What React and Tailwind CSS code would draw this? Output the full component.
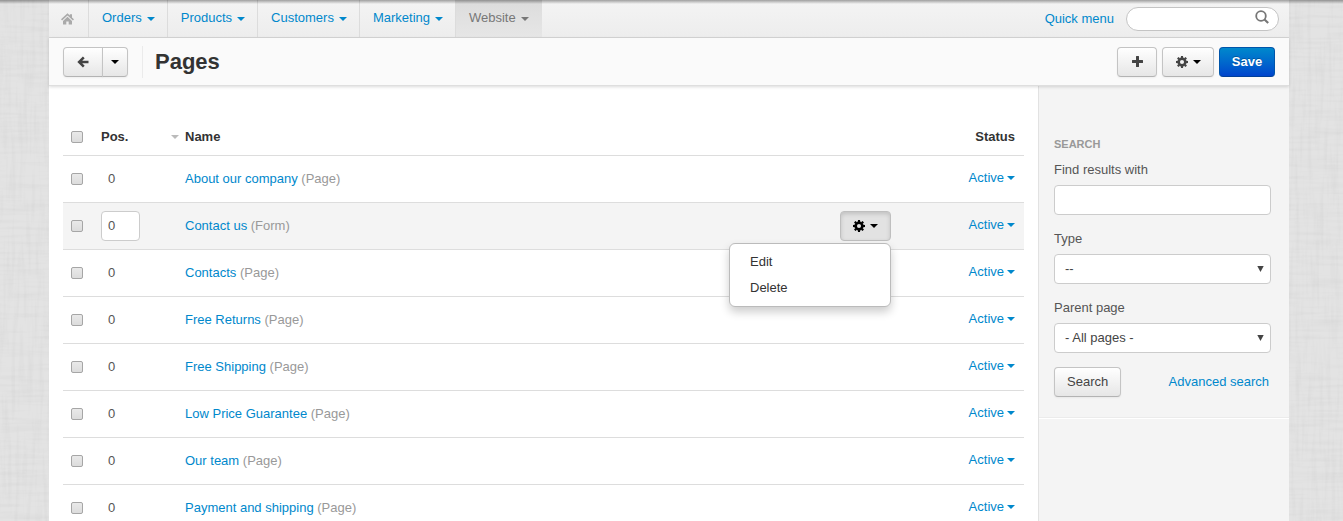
import React from "react";

const NAV = ["Orders", "Products", "Customers", "Marketing", "Website"];

const PAGES = [
  { name: "About our company", type: "Page" },
  { name: "Contact us", type: "Form", open: true },
  { name: "Contacts", type: "Page" },
  { name: "Free Returns", type: "Page" },
  { name: "Free Shipping", type: "Page" },
  { name: "Low Price Guarantee", type: "Page" },
  { name: "Our team", type: "Page" },
  { name: "Payment and shipping", type: "Page" },
];

const BUTTON =
  "flex h-[30px] items-center justify-center rounded border border-[#c4c4c4] border-b-[#b3b3b3] bg-linear-to-b from-white to-[#e6e6e6] text-[#444] shadow-[0_1px_2px_rgba(0,0,0,0.05)]";
const CHECKBOX =
  "block size-3 appearance-none rounded-[2px] border border-[#a6a6a6] bg-linear-to-b from-[#e9e9e9] to-[#dcdcdc] checked:bg-[#0088cc]";
const FIELD = "h-[30px] w-full rounded border border-[#ccc] bg-white text-[#444]";

function Caret({ className = "" }) {
  return (
    <svg className={`h-1 w-2 shrink-0 ${className}`} viewBox="0 0 8 4" fill="currentColor" aria-hidden="true">
      <path d="M0 0h8L4 4z" />
    </svg>
  );
}

function HomeIcon() {
  return (
    <svg className="h-3 w-[13px]" viewBox="0 0 13 12" fill="currentColor" aria-hidden="true">
      <path d="M6.500 .3 8.800 2.400V1.200h2.200v3.200l2 1.900-1.100 1.300L6.500 2.600 1.100 7.600 0 6.300z" />
      <path d="M6.500 3.700 11 7.900V11.600H7.700V8.400H5.300v3.200H2V7.900z" />
    </svg>
  );
}

function ArrowIcon() {
  return (
    <svg className="size-3" viewBox="0 0 12 12" fill="none" stroke="currentColor" strokeWidth="2.500" aria-hidden="true">
      <path d="M6.800 1.300 2.100 6l4.700 4.700M2.300 6h9.200" />
    </svg>
  );
}

function PlusIcon() {
  return (
    <svg className="size-[11px]" viewBox="0 0 11 11" fill="currentColor" aria-hidden="true">
      <path d="M4 .5Q4 0 4.500 0h2Q7 0 7 .5V4h3.500q.5 0 .5.5v2q0 .5-.5.5H7v3.500q0 .5-.5.5h-2Q4 11 4 10.500V7H.5Q0 7 0 6.500v-2Q0 4 .5 4H4z" />
    </svg>
  );
}

function GearIcon() {
  return (
    <svg className="size-3" viewBox="0 0 12 12" aria-hidden="true">
      <circle cx="6" cy="6" r="3.300" fill="none" stroke="currentColor" strokeWidth="2.500" />
      <g fill="currentColor">
        {[0, 45, 90, 135].map((angle) => (
          <g key={angle} transform={`rotate(${angle} 6 6)`}>
            <path d="M4.800 2 5 0h2l.2 2zM4.800 10l.2 2h2l.2-2z" />
          </g>
        ))}
      </g>
    </svg>
  );
}

function SearchIcon() {
  return (
    <svg className="size-[14px]" viewBox="0 0 14 14" fill="none" stroke="currentColor" strokeWidth="1.800" aria-hidden="true">
      <circle cx="6" cy="6" r="4.800" />
      <path d="m9.500 9.500 3.700 3.500" strokeWidth="2.200" />
    </svg>
  );
}

function Linen() {
  return (
    <svg className="absolute inset-0 -z-10 size-full" aria-hidden="true">
      <filter id="weft" x="0" y="0" width="100%" height="100%">
        <feTurbulence type="fractalNoise" baseFrequency="0.020 0.250" numOctaves="2" seed="4" />
        <feColorMatrix values="0 0 0 0 0  0 0 0 0 0  0 0 0 0 0  0.500 0 0 0 -0.200" />
      </filter>
      <filter id="warp" x="0" y="0" width="100%" height="100%">
        <feTurbulence type="fractalNoise" baseFrequency="0.250 0.020" numOctaves="2" seed="9" />
        <feColorMatrix values="0 0 0 0 0  0 0 0 0 0  0 0 0 0 0  0.500 0 0 0 -0.200" />
      </filter>
      <rect width="100%" height="100%" filter="url(#weft)" opacity="0.100" />
      <rect width="100%" height="100%" filter="url(#warp)" opacity="0.100" />
    </svg>
  );
}

function TopNav() {
  return (
    <nav className="flex h-[38px] border-b border-[#d6d6d6] bg-linear-to-b from-[#f4f4f4] to-[#ededed]">
      <a href="#home" aria-label="Home" className="flex w-10 items-center justify-center border-r border-[#dcdcdc] pr-0.5 text-[#aaa]">
        <HomeIcon />
      </a>
      {NAV.map((item) => (
        <a
          key={item}
          href={`#${item.toLowerCase()}`}
          className={
            item === "Website"
              ? "flex items-center gap-[5px] bg-linear-to-b from-[#dcdcdc] to-[#e6e6e6] px-[13px] pb-0.5 text-[#777]"
              : "flex items-center gap-[5px] border-r border-[#dcdcdc] pr-3 pb-0.5 pl-[13px] text-[#0088cc]"
          }
        >
          {item}
          <Caret className="mt-0.5" />
        </a>
      ))}
      <div className="ml-auto flex items-center gap-3 pr-2.5">
        <a href="#quick" className="text-[#0088cc]">Quick menu</a>
        <form className="relative">
          <input type="search" aria-label="Search" className="block h-6 w-[153px] appearance-none rounded-full border border-[#c4c4c4] bg-white pr-8 pl-3" />
          <button type="button" aria-label="Search" className="absolute top-[3px] right-2.5 text-[#777]">
            <SearchIcon />
          </button>
        </form>
      </div>
    </nav>
  );
}

function TitleBar() {
  return (
    <header className="relative flex h-12 items-center border-b border-[#dedede] bg-[#fafafa] px-3.5 shadow-[0_1px_3px_rgba(0,0,0,0.15)]">
      <div className="flex">
        <button type="button" aria-label="Back" className={`${BUTTON} w-10 rounded-r-none`}>
          <ArrowIcon />
        </button>
        <button type="button" aria-label="Recent pages" className={`${BUTTON} -ml-px w-[26px] rounded-l-none`}>
          <Caret className="text-black" />
        </button>
      </div>
      <h1 className="ml-3.5 flex h-8 items-center border-l border-[#ebebeb] pl-3 text-[22px] font-bold text-[#333]">Pages</h1>
      <div className="ml-auto flex gap-[5px]">
        <button type="button" aria-label="Add page" className={`${BUTTON} w-10`}>
          <PlusIcon />
        </button>
        <button type="button" aria-label="Settings" className={`${BUTTON} w-[52px] gap-[5px]`}>
          <GearIcon />
          <Caret className="text-black" />
        </button>
        <button
          type="button"
          className="h-[30px] w-14 rounded border border-[#0055aa] border-b-[#003f99] bg-linear-to-b from-[#0088cc] to-[#0044cc] font-bold text-white [text-shadow:0_-1px_0_rgba(0,0,0,0.25)]"
        >
          Save
        </button>
      </div>
    </header>
  );
}

function RowMenu() {
  return (
    <div className="relative ml-auto w-[51px]">
      <button
        type="button"
        aria-label="Row actions"
        aria-expanded="true"
        className="flex h-[30px] w-full items-center justify-center gap-[5px] rounded border border-[#bfbfbf] bg-[#e2e2e2] text-black shadow-[inset_0_2px_4px_rgba(0,0,0,0.15)]"
      >
        <GearIcon />
        <Caret />
      </button>
      <ul className="absolute top-8 right-0 z-10 w-[162px] rounded-md border border-[#bbb] bg-white py-[5px] text-left shadow-[0_5px_10px_rgba(0,0,0,0.2)]">
        {["Edit", "Delete"].map((action) => (
          <li key={action}>
            <a href={`#${action.toLowerCase()}`} className="block px-5 py-[3px] text-[#333]">{action}</a>
          </li>
        ))}
      </ul>
    </div>
  );
}

function PageTable() {
  return (
    <table className="w-full table-fixed border-collapse">
      <colgroup>
        <col className="w-[38px]" />
        <col className="w-[84px]" />
        <col />
        <col className="w-20" />
        <col className="w-[133px]" />
      </colgroup>
      <thead>
        <tr className="h-[35px] border-b border-[#ddd] text-left text-[#333]">
          <th className="pl-2">
            <input type="checkbox" aria-label="Select all pages" className={CHECKBOX} />
          </th>
          <th>
            <div className="flex items-center justify-between pr-1.5">
              Pos.
              <Caret className="text-[#bbb]" />
            </div>
          </th>
          <th>Name</th>
          <th />
          <th className="pr-[9px] text-right">Status</th>
        </tr>
      </thead>
      <tbody>
        {PAGES.map((page) => (
          <tr key={page.name} className={page.open ? "h-[47px] border-b border-[#ddd] bg-[#f4f4f4]" : "h-[47px] border-b border-[#ddd]"}>
            <td className="pl-2">
              <input type="checkbox" aria-label={`Select ${page.name}`} className={CHECKBOX} />
            </td>
            <td>
              <input
                type="text"
                aria-label={`Position of ${page.name}`}
                defaultValue="0"
                className={
                  page.open
                    ? "block h-[30px] w-[39px] rounded border border-[#ccc] bg-white px-1.5 text-[#555]"
                    : "block h-[30px] w-[39px] rounded border border-transparent bg-transparent px-1.5 text-[#555]"
                }
              />
            </td>
            <td className="text-[#999]">
              <a href="#page" className="text-[#0088cc]">{page.name}</a> ({page.type})
            </td>
            <td>{page.open && <RowMenu />}</td>
            <td className="pr-[9px]">
              <button type="button" className="mb-0.5 ml-auto flex items-center gap-[3px] text-[#0088cc]">
                Active
                <Caret />
              </button>
            </td>
          </tr>
        ))}
      </tbody>
    </table>
  );
}

function SelectField({ id, label, option }) {
  return (
    <div className="mb-3.5">
      <label htmlFor={id} className="mb-[5px] block">{label}</label>
      <div className="relative">
        <select id={id} className={`${FIELD} block appearance-none px-2.5`}>
          <option>{option}</option>
        </select>
        <svg className="pointer-events-none absolute top-3 right-[7px] h-1.5 w-[7px] text-[#444]" viewBox="0 0 7 6" fill="currentColor" aria-hidden="true">
          <path d="M.3 0h6.400L3.500 6z" />
        </svg>
      </div>
    </div>
  );
}

function Sidebar() {
  return (
    <aside className="w-[251px] shrink-0 border-l border-[#e2e2e2] bg-[#f4f4f4] text-[#555]">
      <form className="border-b border-[#ebebeb] pt-12 pr-[18px] pb-5 pl-[15px] shadow-[0_1px_0_#fff]">
        <h2 className="mb-1.5 text-[11px] leading-5 font-bold text-[#999]">SEARCH</h2>
        <div className="mb-3.5">
          <label htmlFor="find" className="mb-[5px] block">Find results with</label>
          <input id="find" type="text" className={`${FIELD} block px-2.5`} />
        </div>
        <SelectField id="type" label="Type" option="--" />
        <SelectField id="parent" label="Parent page" option="- All pages -" />
        <div className="flex items-center justify-between pr-0.5">
          <button type="button" className={`${BUTTON} px-3`}>Search</button>
          <a href="#advanced" className="text-[#0088cc]">Advanced search</a>
        </div>
      </form>
    </aside>
  );
}

export default function App() {
  return (
    <div className="relative isolate flex min-h-screen flex-col bg-[#e3e3e3] pr-[54px] pl-[49px] font-['Liberation_Sans',Arial,sans-serif] text-[13px] leading-5">
      <Linen />
      <div className="absolute inset-x-0 top-0 z-20 h-1 bg-linear-to-b from-black/35 to-transparent" />
      <TopNav />
      <TitleBar />
      <div className="flex grow bg-white">
        <main className="min-w-0 grow px-3.5 pt-[34px]">
          <PageTable />
        </main>
        <Sidebar />
      </div>
    </div>
  );
}
